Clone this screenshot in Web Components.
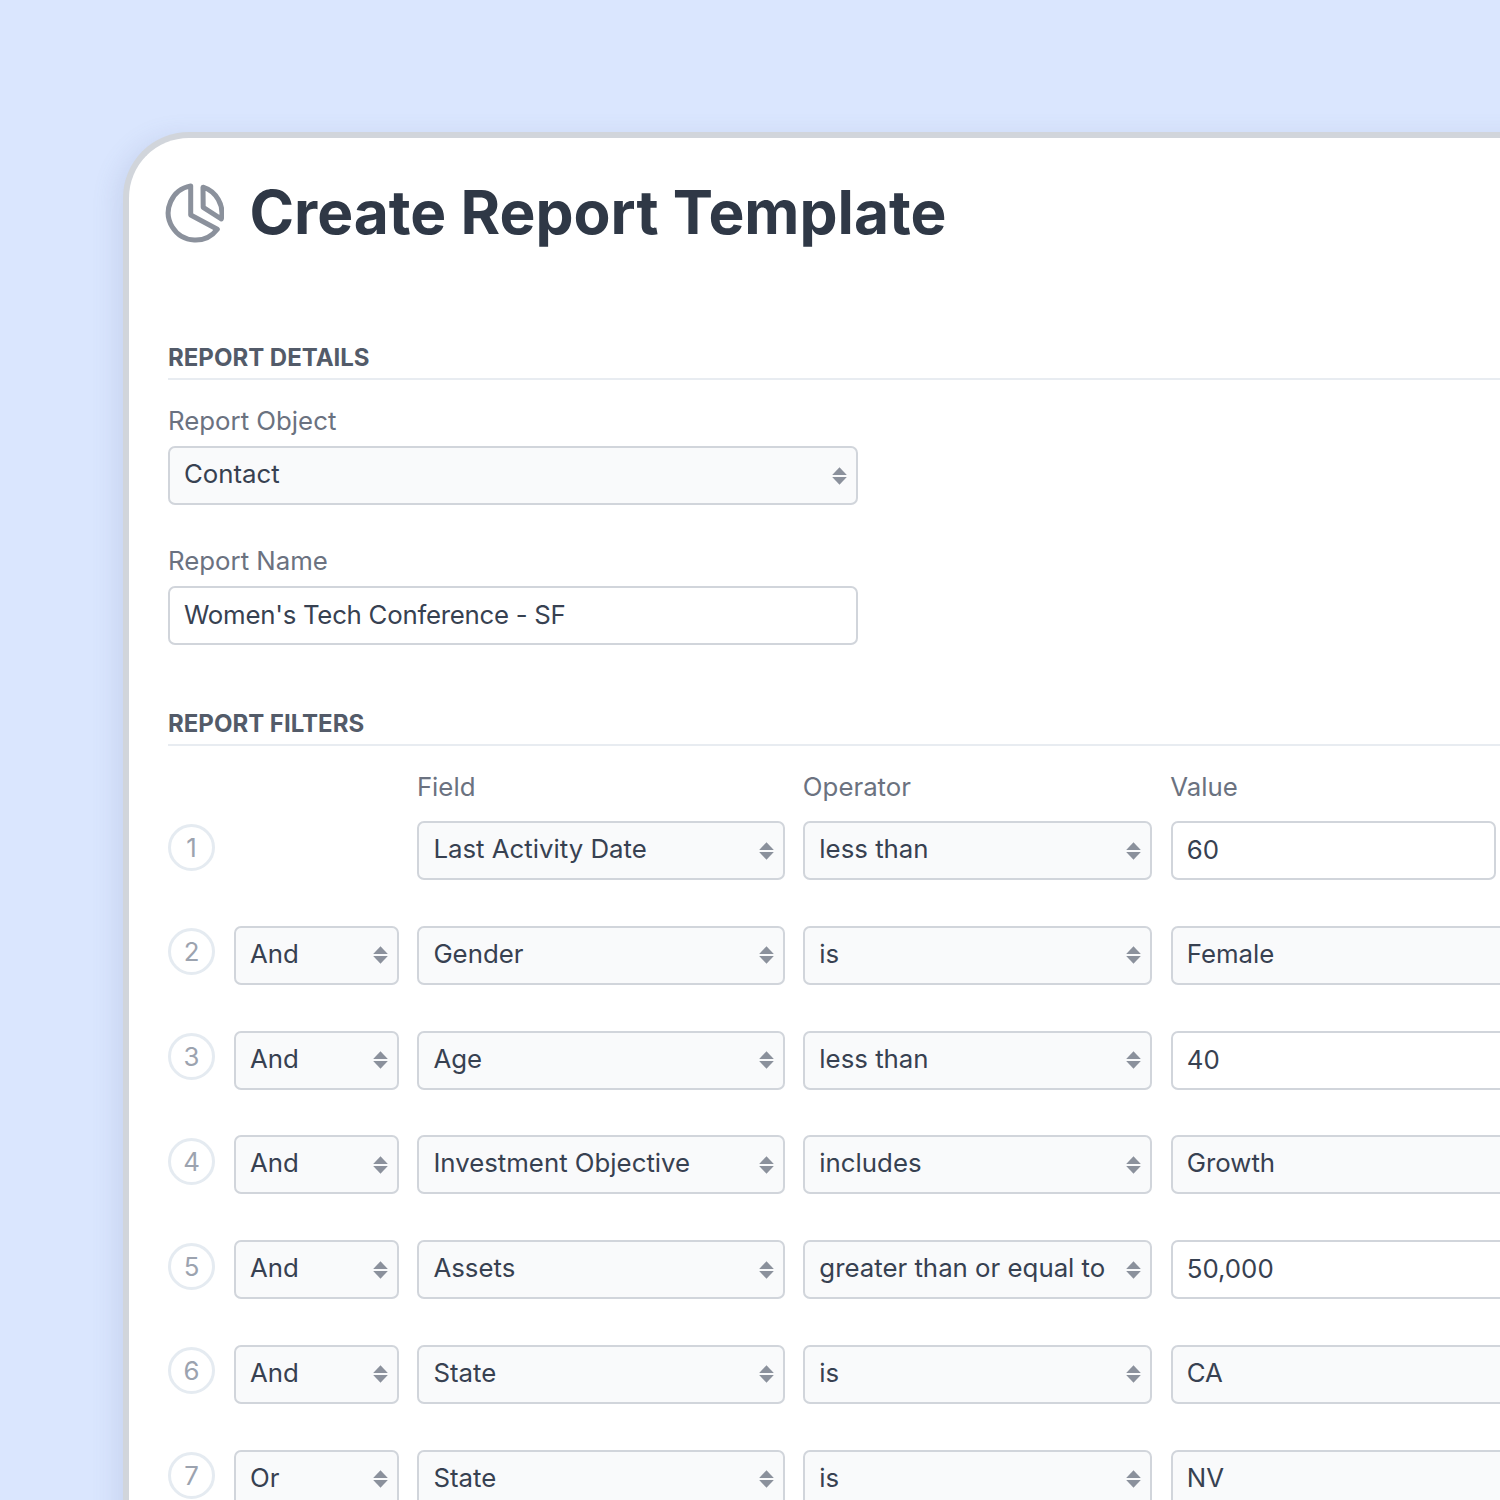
<!DOCTYPE html>
<html>
<head>
<meta charset="utf-8">
<style>
    html, body { margin: 0; height: 1500px; overflow: hidden; }
    body {
        background: #dae6fe;
        font-family: Inter, "Liberation Sans", sans-serif;
        color: #374151;
    }
</style>
</head>
<body>
<report-card>
    <page-title slot="title">Create Report Template</page-title>

    <section-heading>Report Details</section-heading>
    <form-field label="Report Object" style="margin-top:23px"><ui-select wide>Contact</ui-select></form-field>
    <form-field label="Report Name" style="margin-top:38px"><ui-input wide style="--tracking:-.26px">Women's Tech Conference - SF</ui-input></form-field>

    <section-heading style="margin-top:64px">Report Filters</section-heading>

    <filter-head></filter-head>
    <filter-row n="1" field="Last Activity Date" op="less than" value="60" input short></filter-row>
    <filter-row n="2" join="And" field="Gender" op="is" value="Female"></filter-row>
    <filter-row n="3" join="And" field="Age" op="less than" value="40" input></filter-row>
    <filter-row n="4" join="And" field="Investment Objective" op="includes" value="Growth"></filter-row>
    <filter-row n="5" join="And" field="Assets" op="greater than or equal to" value="50,000" input></filter-row>
    <filter-row n="6" join="And" field="State" op="is" value="CA"></filter-row>
    <filter-row n="7" join="Or" field="State" op="is" value="NV"></filter-row>
</report-card>

<script>
const boxCss = `
    .box {
        box-sizing: border-box;
        height: 59px;
        display: flex;
        align-items: center;
        justify-content: space-between;
        padding: 0 9px 0 14px;
        border: 2px solid #d1d5db;
        border-radius: 7px;
        font-size: 25.8px;
        letter-spacing: var(--tracking, 0);
        color: #374151;
        white-space: nowrap;
        overflow: hidden;
    }
    .box span { margin-top: -2px; }
`

class ReportCard extends HTMLElement {
    constructor() {
        super()
        this.attachShadow({mode: "open"})
        this.shadowRoot.innerHTML = `
        <style>
            :host {
                display: block;
                box-sizing: border-box;
                width: 1500px;
                height: 1500px;
                margin: 132px 0 0 123px;
                padding: 40px 0 0 39px;
                background: #fff;
                border: 6px solid #d1d5db;
                border-right: 0;
                border-bottom: 0;
                border-top-left-radius: 66px;
                box-shadow: -8px 4px 24px rgba(100, 116, 160, .14);
            }
            .title { margin-bottom: 95px; }
        </style>
        <div class="title"><slot name="title"></slot></div>
        <slot></slot>`
    }
}

class PageTitle extends HTMLElement {
    constructor() {
        super()
        this.attachShadow({mode: "open"})
        this.shadowRoot.innerHTML = `
        <style>
            :host {
                display: flex;
                align-items: center;
                gap: 25.4px;
                margin-left: -4px;
                height: 70px;
                font-size: 60.4px;
                font-weight: 700;
                color: #2f3846;
                white-space: nowrap;
            }
            svg { width: 60px; height: 60px; flex: none; }
            span { margin-top: -2px; }
        </style>
        <svg viewBox="0 0 60 60" fill="none" stroke="#8b919c" stroke-width="5" stroke-linejoin="round" stroke-linecap="round">
            <path d="M26.7 2.9A27.3 27.3 0 1 0 53.3 46.3L26.7 32Z"/>
            <path d="M39 4.2A27.3 27.3 0 0 1 57.3 36L39.2 24.3Z"/>
        </svg>
        <span><slot></slot></span>`
    }
}

class SectionHeading extends HTMLElement {
    constructor() {
        super()
        this.attachShadow({mode: "open"})
        this.shadowRoot.innerHTML = `
        <style>
            :host {
                display: block;
                height: 35px;
                line-height: 30px;
                font-size: 24px;
                font-weight: 700;
                color: #535b69;
                text-transform: uppercase;
                border-bottom: 2px solid #e8ecf1;
                box-sizing: content-box;
            }
        </style>
        <slot></slot>`
    }
}

class FormField extends HTMLElement {
    constructor() {
        super()
        this.attachShadow({mode: "open"})
        this.shadowRoot.innerHTML = `
        <style>
            :host { display: block; }
            label {
                display: block;
                height: 38px;
                line-height: 36px;
                margin-bottom: 5px;
                font-size: 25.8px;
                color: #6b7280;
            }
        </style>
        <label>${this.getAttribute("label")}</label>
        <slot></slot>`
    }
}

class UiSelect extends HTMLElement {
    constructor() {
        super()
        this.attachShadow({mode: "open"})
        this.shadowRoot.innerHTML = `
        <style>
            :host { display: block; }
            :host([wide]) { width: 690px; }
            ${boxCss}
            .box { background: #f9fafb; }
            .box span { margin-top: -4px; }
            svg { width: 15px; height: 18px; flex: none; margin-left: 8px; }
        </style>
        <div class="box">
            <span><slot></slot></span>
            <svg viewBox="0 0 15 18" fill="#8b919c">
                <path d="M7.5 0.2L14.8 7.9H0.2Z"/>
                <path d="M7.5 17.8L14.8 10.1H0.2Z"/>
            </svg>
        </div>`
    }
}

class UiInput extends HTMLElement {
    constructor() {
        super()
        this.attachShadow({mode: "open"})
        this.shadowRoot.innerHTML = `
        <style>
            :host { display: block; }
            :host([wide]) { width: 690px; }
            ${boxCss}
            .box { background: #fff; }
        </style>
        <div class="box"><span><slot></slot></span></div>`
    }
}

class StepBadge extends HTMLElement {
    constructor() {
        super()
        this.attachShadow({mode: "open"})
        this.shadowRoot.innerHTML = `
        <style>
            :host {
                box-sizing: border-box;
                display: flex;
                align-items: center;
                justify-content: center;
                width: 47px;
                height: 47px;
                border: 3.5px solid #e5ebf1;
                border-radius: 50%;
                font-size: 25.8px;
                color: #9ca3af;
                background: #fff;
            }
        </style>
        <slot></slot>`
    }
}

const rowColumns = "47.6px 165px 367.6px 349px 1fr"

class FilterHead extends HTMLElement {
    constructor() {
        super()
        this.attachShadow({mode: "open"})
        this.shadowRoot.innerHTML = `
        <style>
            :host {
                display: grid;
                grid-template-columns: ${rowColumns};
                column-gap: 18.4px;
                width: 1400px;
                height: 38px;
                margin: 23px 0 14px -0.5px;
                line-height: 36px;
                font-size: 25.8px;
                color: #6b7280;
            }
            .field { grid-column: 3; }
        </style>
        <span class="field">Field</span><span>Operator</span><span>Value</span>`
    }
}

class FilterRow extends HTMLElement {
    constructor() {
        super()
        const get = name => this.getAttribute(name)
        const value = this.hasAttribute("input")
            ? `<ui-input>${get("value")}</ui-input>`
            : `<ui-select>${get("value")}</ui-select>`
        this.attachShadow({mode: "open"})
        this.shadowRoot.innerHTML = `
        <style>
            :host {
                display: grid;
                grid-template-columns: ${rowColumns};
                column-gap: 18.4px;
                align-items: center;
                width: 1400px;
                height: 59px;
                margin-bottom: 45.75px;
            }
            :host([short]) { width: 1327.5px; }
            step-badge { margin-top: -7px; }
            .join { grid-column: 2; }
            .field { grid-column: 3; }
        </style>
        <step-badge>${get("n")}</step-badge>
        ${get("join") ? `<ui-select class="join">${get("join")}</ui-select>` : ""}
        <ui-select class="field">${get("field")}</ui-select>
        <ui-select>${get("op")}</ui-select>
        ${value}`
    }
}

customElements.define("report-card", ReportCard)
customElements.define("page-title", PageTitle)
customElements.define("section-heading", SectionHeading)
customElements.define("form-field", FormField)
customElements.define("ui-select", UiSelect)
customElements.define("ui-input", UiInput)
customElements.define("step-badge", StepBadge)
customElements.define("filter-head", FilterHead)
customElements.define("filter-row", FilterRow)
</script>
</body>
</html>
